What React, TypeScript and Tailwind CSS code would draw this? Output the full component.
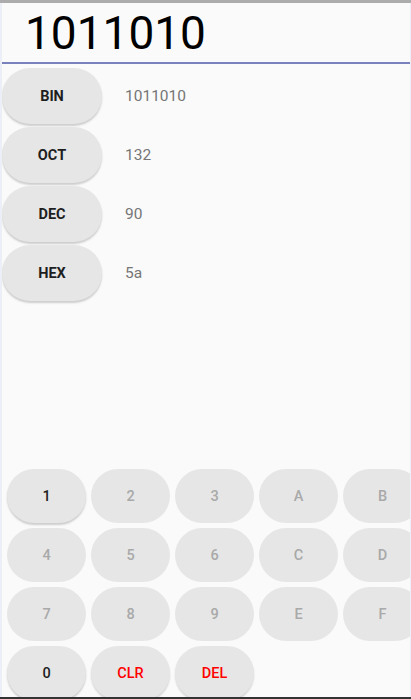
const bases = [
  { label: "BIN", value: "1011010" },
  { label: "OCT", value: "132" },
  { label: "DEC", value: "90" },
  { label: "HEX", value: "5a" },
];

const keys = [
  { k: "1", on: true },
  { k: "2" },
  { k: "3" },
  { k: "A" },
  { k: "B" },
  { k: "4" },
  { k: "5" },
  { k: "6" },
  { k: "C" },
  { k: "D" },
  { k: "7" },
  { k: "8" },
  { k: "9" },
  { k: "E" },
  { k: "F" },
  { k: "0", on: true },
  { k: "CLR", red: true },
  { k: "DEL", red: true },
];

export default function App() {
  return (
    <div className="flex h-[699px] w-[411px] flex-col bg-[#fafafa] font-['Roboto',sans-serif]">
      <div className="h-[3px] bg-[#acacac]" />
      <div className="flex min-h-0 flex-1 flex-col overflow-hidden border-l-2 border-r border-[#eceef8]">
        {/* display */}
        <div className="h-[61px] border-b-2 border-[#7a82bd] pl-[23px] pt-[3px]">
          <p className="text-[46px] leading-[54px] text-black">1011010</p>
        </div>

        {/* conversions */}
        <div className="mt-[4px] flex flex-col gap-[3px]">
          {bases.map((b) => (
            <div key={b.label} className="flex items-center">
              <button className="h-[56px] w-[100px] rounded-full bg-[#e6e6e6] pt-[2px] text-[14.5px] font-bold text-[#1e1e1e] shadow-[0_2px_2px_rgba(0,0,0,0.18)]">
                {b.label}
              </button>
              <span className="ml-[23px] pt-[2px] text-[15.5px] text-[#757575]">{b.value}</span>
            </div>
          ))}
        </div>

        {/* keypad */}
        <div className="mt-auto mb-[-3px] ml-[5px] grid w-[416px] grid-cols-[repeat(5,79px)] gap-[5px]">
          {keys.map((key) => (
            <button
              key={key.k}
              className={
                "h-[54px] rounded-full bg-[#e6e6e6] pt-[1px] text-[14.5px] font-medium " +
                (key.red
                  ? "font-bold text-[#ff0000] shadow-[0_2px_2px_rgba(0,0,0,0.15)]"
                  : key.on
                  ? "text-[#1e1e1e] shadow-[0_2px_2px_rgba(0,0,0,0.18)]"
                  : "text-[#a9a9a9]")
              }
            >
              {key.k}
            </button>
          ))}
        </div>
      </div>
      <div className="h-[2px] bg-[#333333]" />
    </div>
  );
}
